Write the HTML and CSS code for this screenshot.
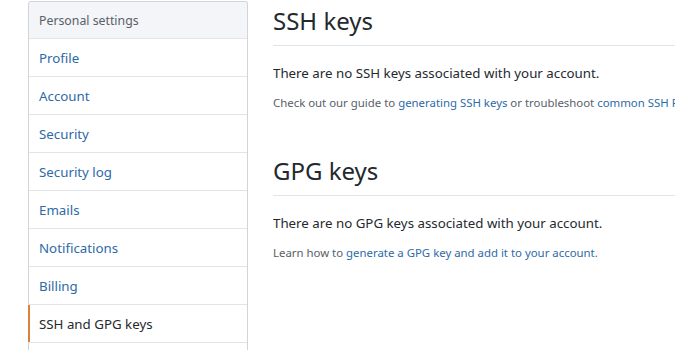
FILE: index.html
```html
<!DOCTYPE html>
<html>
<head>
<meta charset="utf-8">
<title>SSH and GPG keys</title>
<link rel="stylesheet" href="styles.css">
</head>
<body>
<div class="settings_layout">
	<nav class="settings_menu">
		<div class="settings_menu-heading">Personal settings</div>
		<a class="settings_menu-item" href="#">Profile</a>
		<a class="settings_menu-item" href="#">Account</a>
		<a class="settings_menu-item" href="#">Security</a>
		<a class="settings_menu-item" href="#">Security log</a>
		<a class="settings_menu-item" href="#">Emails</a>
		<a class="settings_menu-item" href="#">Notifications</a>
		<a class="settings_menu-item" href="#">Billing</a>
		<a class="settings_menu-item selected" href="#">SSH and GPG keys</a>
		<div class="settings_menu-rest"></div>
	</nav>

	<div class="settings_content">
		<div class="settings_section">
			<h2 class="settings_section-title">SSH keys</h2>
			<p class="settings_section-blank">There are no SSH keys associated with your account.</p>
			<p class="settings_section-note">Check out our guide to <a href="#">generating SSH keys</a> or troubleshoot <a href="#">common SSH Problems</a>.</p>
		</div>
		<div class="settings_section">
			<h2 class="settings_section-title">GPG keys</h2>
			<p class="settings_section-blank">There are no GPG keys associated with your account.</p>
			<p class="settings_section-note">Learn how to <a href="#">generate a GPG key and add it to your account</a>.</p>
		</div>
	</div>
</div>
</body>
</html>
```

FILE: styles.css
```css
html, body { margin: 0; padding: 0; background: #ffffff; overflow: hidden; height: 350px; }
body { font: 13.3px "Noto Sans", "Open Sans", sans-serif; color: #24292e; }

.settings_layout { display: flex; gap: 25px; padding: 1px 0 0 28px; height: 349px; overflow: hidden; }

.settings_menu {
	flex: 0 0 220px;
	display: flex;
	flex-direction: column;
	border: 1px solid #d1d5da;
	border-bottom: 0;
	border-radius: 3px 3px 0 0;
	box-sizing: border-box;
	width: 220px;
}
.settings_menu .settings_menu-heading {
	padding: 9px 10px 7px 10px;
	line-height: 20px;
	font-size: 12.3px;
	background-color: #f3f5f8;
	color: #586069;
	border-bottom: 1px solid #e1e4e8;
	border-radius: 3px 3px 0 0;
}
.settings_menu .settings_menu-item {
	position: relative;
	padding: 9px 10px 7px 10px;
	line-height: 21px;
	color: #2d6aa8;
	text-decoration: none;
	border-bottom: 1px solid #e1e4e8;
}
.settings_menu .settings_menu-item.selected { color: #24292e; }
.settings_menu .settings_menu-item.selected::before {
	content: "";
	position: absolute;
	left: -1px;
	top: 0;
	bottom: 0;
	width: 2px;
	background: #d9823b;
}
.settings_menu .settings_menu-rest { flex: 1; }

.settings_content { flex: 1; min-width: 0; white-space: nowrap; overflow: hidden; }
.settings_section { margin-bottom: 39px; }
.settings_section .settings_section-title {
	margin: 0;
	font-size: 24px;
	font-weight: normal;
	line-height: 40px;
	padding-bottom: 4px;
	border-bottom: 1px solid #e1e4e8;
}
.settings_section .settings_section-blank { margin: 15px 0 0 0; line-height: 24px; }
.settings_section .settings_section-note { margin: 9px 0 0 0; font-size: 11.4px; line-height: 18px; color: #586069; }
.settings_section .settings_section-note a { color: #2d6aa8; text-decoration: none; }
```
